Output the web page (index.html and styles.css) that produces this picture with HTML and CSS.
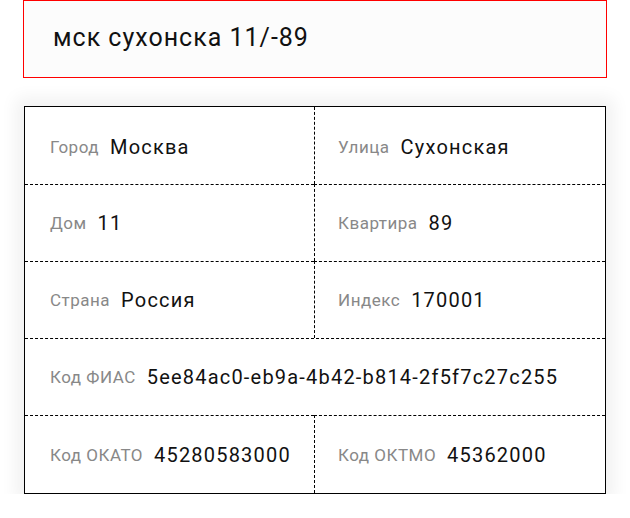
FILE: index.html
```html
<!DOCTYPE html>
<html lang="ru">
<head>
<meta charset="utf-8">
<link rel="stylesheet" href="styles.css">
</head>
<body>
<div class="page">
  <div class="search">мск сухонска 11/-89</div>
  <div class="card">
    <div class="cell first"><span class="label">Город</span><span class="value">Москва</span></div>
    <div class="cell first right"><span class="label">Улица</span><span class="value">Сухонская</span></div>
    <div class="cell row"><span class="label">Дом</span><span class="value">11</span></div>
    <div class="cell row right"><span class="label">Квартира</span><span class="value">89</span></div>
    <div class="cell row"><span class="label">Страна</span><span class="value">Россия</span></div>
    <div class="cell row right"><span class="label">Индекс</span><span class="value">170001</span></div>
    <div class="cell row wide"><span class="label">Код ФИАС</span><span class="value">5ee84ac0-eb9a-4b42-b814-2f5f7c27c255</span></div>
    <div class="cell row last"><span class="label">Код ОКАТО</span><span class="value">45280583000</span></div>
    <div class="cell row right last"><span class="label">Код ОКТМО</span><span class="value">45362000</span></div>
  </div>
</div>
</body>
</html>
```

FILE: styles.css
```css
body {
  margin: 0;
  font-family: Roboto, "Liberation Sans", sans-serif;
  background: #fff;
}
.page {
  padding-left: 23px;
}
.search {
  box-sizing: border-box;
  width: 584px;
  height: 78px;
  border: 1px solid #f00;
  background: #fcfcfc;
  padding-left: 29px;
  padding-bottom: 3px;
  display: flex;
  align-items: center;
  font-size: 25px;
  letter-spacing: 1px;
  color: #111;
}
.card {
  margin-top: 28px;
  margin-left: 1px;
  width: 582px;
  box-sizing: border-box;
  border: 1px solid #000;
  display: grid;
  grid-template-columns: 289px 1fr;
  box-shadow: 0 0 16px 8px rgba(0, 0, 0, 0.06);
  background: #fff;
}
.cell {
  box-sizing: border-box;
  height: 77px;
  display: flex;
  align-items: center;
  gap: 11px;
  padding-left: 25px;
}
.cell.first {
  padding-top: 3px;
}
.cell.last {
  height: 78px;
}
.cell.row {
  border-top: 1px dashed #000;
}
.cell.right {
  border-left: 1px dashed #000;
  padding-left: 23px;
}
.cell.wide {
  grid-column: span 2;
}
.label {
  font-size: 17px;
  letter-spacing: 0.5px;
  color: #888;
}
.value {
  font-size: 20px;
  letter-spacing: 1.2px;
  color: #111;
}
```
